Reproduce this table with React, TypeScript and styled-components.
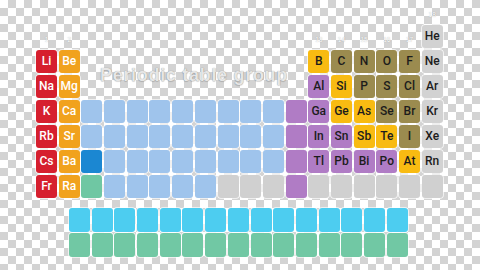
import React from "react";
import styled, { createGlobalStyle } from "styled-components";

const Global = createGlobalStyle`
  html, body { margin: 0; padding: 0; }
  body {
    width: 480px;
    height: 270px;
    overflow: hidden;
    background-color: #ffffff;
    background-image: conic-gradient(#d3d3d3 25%, #ffffff 0 50%, #d3d3d3 0 75%, #ffffff 0);
    background-size: 16px 16px;
    font-family: "Liberation Sans", Arial, sans-serif;
  }
`;

type Kind =
  | "alkali"
  | "earth"
  | "trans"
  | "la"
  | "ac"
  | "post"
  | "metalloid"
  | "nonmetal"
  | "noble"
  | "unknown"
  | "lanth"
  | "actin";

const palette: Record<Kind, { bg: string; fg: string }> = {
  alkali: { bg: "#d61f2e", fg: "#ffffff" },
  earth: { bg: "#f1a21d", fg: "#ffffff" },
  trans: { bg: "#9fc4ec", fg: "#1c1c1c" },
  la: { bg: "#1b87d2", fg: "#ffffff" },
  ac: { bg: "#6fc7a3", fg: "#1c1c1c" },
  post: { bg: "#b07cc5", fg: "#1c1c1c" },
  metalloid: { bg: "#f8bb12", fg: "#1c1c1c" },
  nonmetal: { bg: "#9b8b4f", fg: "#1c1c1c" },
  noble: { bg: "#d2d2d2", fg: "#1c1c1c" },
  unknown: { bg: "#d0d0d0", fg: "#1c1c1c" },
  lanth: { bg: "#4dcdf0", fg: "#1c1c1c" },
  actin: { bg: "#71c8a4", fg: "#1c1c1c" },
};

type CellData = { row: number; col: number; kind: Kind; sym?: string };

const cells: CellData[] = [];
const add = (row: number, col: number, kind: Kind, sym?: string) =>
  cells.push({ row, col, kind, sym });

// Row 1
add(1, 18, "noble", "He");
// Row 2
add(2, 1, "alkali", "Li");
add(2, 2, "earth", "Be");
add(2, 13, "metalloid", "B");
add(2, 14, "nonmetal", "C");
add(2, 15, "nonmetal", "N");
add(2, 16, "nonmetal", "O");
add(2, 17, "nonmetal", "F");
add(2, 18, "noble", "Ne");
// Row 3
add(3, 1, "alkali", "Na");
add(3, 2, "earth", "Mg");
add(3, 13, "post", "Al");
add(3, 14, "metalloid", "Si");
add(3, 15, "nonmetal", "P");
add(3, 16, "nonmetal", "S");
add(3, 17, "nonmetal", "Cl");
add(3, 18, "noble", "Ar");
// Row 4
add(4, 1, "alkali", "K");
add(4, 2, "earth", "Ca");
for (let c = 3; c <= 11; c++) add(4, c, "trans");
add(4, 12, "post");
add(4, 13, "post", "Ga");
add(4, 14, "metalloid", "Ge");
add(4, 15, "metalloid", "As");
add(4, 16, "nonmetal", "Se");
add(4, 17, "nonmetal", "Br");
add(4, 18, "noble", "Kr");
// Row 5
add(5, 1, "alkali", "Rb");
add(5, 2, "earth", "Sr");
for (let c = 3; c <= 11; c++) add(5, c, "trans");
add(5, 12, "post");
add(5, 13, "post", "In");
add(5, 14, "post", "Sn");
add(5, 15, "metalloid", "Sb");
add(5, 16, "metalloid", "Te");
add(5, 17, "nonmetal", "I");
add(5, 18, "noble", "Xe");
// Row 6
add(6, 1, "alkali", "Cs");
add(6, 2, "earth", "Ba");
add(6, 3, "la");
for (let c = 4; c <= 11; c++) add(6, c, "trans");
add(6, 12, "post");
add(6, 13, "post", "Tl");
add(6, 14, "post", "Pb");
add(6, 15, "post", "Bi");
add(6, 16, "post", "Po");
add(6, 17, "metalloid", "At");
add(6, 18, "noble", "Rn");
// Row 7
add(7, 1, "alkali", "Fr");
add(7, 2, "earth", "Ra");
add(7, 3, "ac");
for (let c = 4; c <= 8; c++) add(7, c, "trans");
for (let c = 9; c <= 11; c++) add(7, c, "unknown");
add(7, 12, "post");
for (let c = 13; c <= 18; c++) add(7, c, "unknown");

const labels: { row: number; col: number; text: string }[] = [
  { row: 1, col: 1, text: "1" },
  { row: 1, col: 2, text: "2" },
  { row: 1, col: 13, text: "13" },
  { row: 1, col: 14, text: "14" },
  { row: 1, col: 15, text: "15" },
  { row: 1, col: 16, text: "16" },
  { row: 1, col: 17, text: "17" },
  { row: 0, col: 18, text: "18" },
];

const Page = styled.div`
  display: flex;
  flex-direction: column;
  padding-left: 36px;
`;

const Table = styled.div`
  display: grid;
  grid-template-columns: repeat(18, 21px);
  grid-template-rows: repeat(8, 22.5px);
  column-gap: 1.7px;
  row-gap: 2.5px;
`;

const FBlock = styled.div`
  display: grid;
  grid-template-columns: repeat(15, 21px);
  grid-auto-rows: 23.5px;
  column-gap: 1.7px;
  row-gap: 1.5px;
  margin-top: 10.5px;
  margin-left: 33px;
`;

const Cell = styled.div<{ $kind: Kind; $row?: number; $col?: number }>`
  grid-row: ${(p) => (p.$row !== undefined ? p.$row + 1 : "auto")};
  grid-column: ${(p) => (p.$col !== undefined ? p.$col : "auto")};
  background: ${(p) => palette[p.$kind].bg};
  color: ${(p) => palette[p.$kind].fg};
  border-radius: 3px;
  box-shadow: 0 0 0 0.8px rgba(255, 255, 255, 0.85);
  display: flex;
  align-items: center;
  justify-content: center;
  font-family: Roboto, "Liberation Sans", Arial, sans-serif;
  font-size: 12px;
  font-weight: 500;
`;

const GroupLabel = styled.div<{ $row: number; $col: number }>`
  grid-row: ${(p) => p.$row + 1};
  grid-column: ${(p) => p.$col};
  align-self: end;
  justify-self: center;
  margin-bottom: 4px;
  font-size: 6.5px;
  line-height: 1;
  color: #ffffff;
  text-shadow: 0 0 1px rgba(0, 0, 0, 0.35);
`;

const Title = styled.div`
  grid-row: 3 / 5;
  grid-column: 3 / 13;
  align-self: center;
  justify-self: center;
  margin-top: 3px;
  font-size: 18px;
  font-weight: 700;
  letter-spacing: 0.7px;
  color: #e6e6e6;
  text-shadow: 0 0 1px rgba(0, 0, 0, 0.4), 0 1px 1px rgba(0, 0, 0, 0.12);
  white-space: nowrap;
`;

export default function App() {
  return (
    <>
      <Global />
      <Page>
        <Table>
          {labels.map((l) => (
            <GroupLabel key={`l${l.col}`} $row={l.row} $col={l.col}>
              {l.text}
            </GroupLabel>
          ))}
          <Title>Periodic table group</Title>
          {cells.map((c) => (
            <Cell key={`${c.row}-${c.col}`} $kind={c.kind} $row={c.row} $col={c.col}>
              {c.sym}
            </Cell>
          ))}
        </Table>
        <FBlock>
          {Array.from({ length: 15 }).map((_, i) => (
            <Cell key={`la${i}`} $kind="lanth" />
          ))}
          {Array.from({ length: 15 }).map((_, i) => (
            <Cell key={`ac${i}`} $kind="actin" />
          ))}
        </FBlock>
      </Page>
    </>
  );
}
